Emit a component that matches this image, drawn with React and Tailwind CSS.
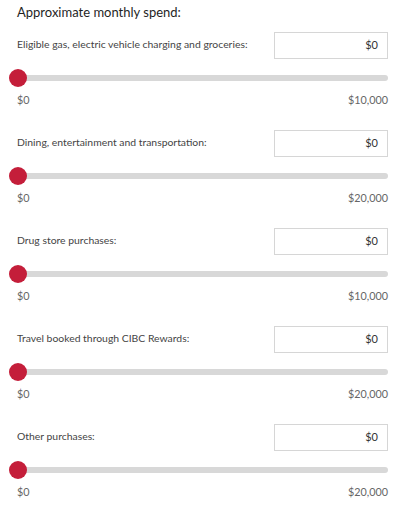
const rows = [
  { label: 'Eligible gas, electric vehicle charging and groceries:', max: '$10,000' },
  { label: 'Dining, entertainment and transportation:', max: '$20,000' },
  { label: 'Drug store purchases:', max: '$10,000' },
  { label: 'Travel booked through CIBC Rewards:', max: '$20,000' },
  { label: 'Other purchases:', max: '$20,000' },
];

function SpendRow({ label, max }) {
  return (
    <div className="flex flex-col">
      <div className="flex items-center justify-between h-[27px]">
        <span className="text-[10.4px] leading-[16px] text-[#444] -mt-[3px]">{label}</span>
        <div className="w-[114px] h-[27px] border border-[#d6d6d6] bg-white flex items-center justify-end pr-[9px] text-[11px] text-[#333]">
          $0
        </div>
      </div>

      {/* slider */}
      <div className="relative h-[18px] mt-[10px] flex items-center">
        <div className="w-full h-[6px] rounded-r-[3px] bg-[#d8d8d8]" />
        <div className="absolute left-[-8px] top-0 w-[18px] h-[18px] rounded-full bg-[#c41e3a]" />
      </div>

      <div className="flex justify-between mt-[5px] text-[10.8px] leading-[16px] text-[#666]">
        <span>$0</span>
        <span>{max}</span>
      </div>
    </div>
  );
}

export default function App() {
  return (
    <div className="w-[408px] h-[512px] bg-white pl-[17px] pr-[20px] pt-[2px] overflow-hidden" style={{ fontFamily: 'Lato, "Noto Sans", sans-serif' }}>
      <h2 className="text-[13px] leading-[20px] text-[#1f1f1f]">Approximate monthly spend:</h2>
      <div className="flex flex-col gap-[22px] mt-[10px]">
        {rows.map((r) => (
          <SpendRow key={r.label} {...r} />
        ))}
      </div>
    </div>
  );
}
